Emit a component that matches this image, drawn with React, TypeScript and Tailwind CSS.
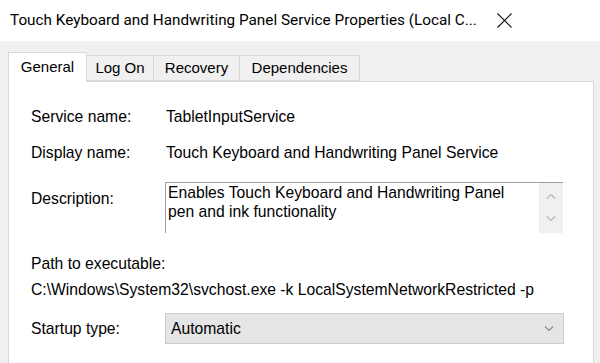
import React from "react";

const Chevron = ({ up = false, color = "#b5b5b5" }: { up?: boolean; color?: string }) => (
  <svg width="10" height="6" viewBox="0 0 10 6" fill="none">
    <path
      d={up ? "M1 5.5 L5 1.5 L9 5.5" : "M1 0.5 L5 4.5 L9 0.5"}
      stroke={color}
      strokeWidth="1.2"
    />
  </svg>
);

export default function App() {
  return (
    <div
      className="w-[600px] h-[363px] overflow-hidden bg-[#f0f0f0] text-black"
      style={{ fontFamily: '"Liberation Sans", Arial, sans-serif' }}
    >
      {/* Title bar */}
      <div className="h-[41px] bg-white flex items-center pl-[10px]">
        <span
          className="w-[487px] shrink-0 text-[15.3px] leading-none whitespace-nowrap"
          style={{ fontFamily: 'Roboto, "Liberation Sans", sans-serif' }}
        >
          Touch Keyboard and Handwriting Panel Service Properties (Local C...
        </span>
        <svg className="shrink-0" width="15" height="15" viewBox="0 0 15 15">
          <path d="M0.5 0.5 L14.5 14.5 M14.5 0.5 L0.5 14.5" stroke="#111" strokeWidth="1.1" />
        </svg>
      </div>

      {/* Tabs */}
      <div className="pt-[11px] pl-[8px] flex items-end text-[15px]">
        <div className="relative z-10 -mb-px w-[79px] h-[30px] bg-white border border-b-0 border-[#d9d9d9] flex items-center justify-center pb-[1px]">
          General
        </div>
        <div className="w-[67px] h-[26px] border border-l-0 border-[#d9d9d9] bg-[#f0f0f0] flex items-center justify-center">
          Log On
        </div>
        <div className="w-[86px] h-[26px] border border-l-0 border-[#d9d9d9] bg-[#f0f0f0] flex items-center justify-center">
          Recovery
        </div>
        <div className="w-[120px] h-[26px] border border-l-0 border-[#d9d9d9] bg-[#f0f0f0] flex items-center justify-center">
          Dependencies
        </div>
      </div>

      {/* Panel */}
      <div className="ml-[8px] w-[586px] h-[300px] bg-white border border-[#d9d9d9] pl-[22px] pt-[25px] text-[15.7px]">
        <div className="flex h-[20px] items-center">
          <div className="w-[134px]">Service name:</div>
          <div className="pl-[1px]">TabletInputService</div>
        </div>
        <div className="flex h-[20px] items-center mt-[16px]">
          <div className="w-[134px]">Display name:</div>
          <div className="pl-[1px]">Touch Keyboard and Handwriting Panel Service</div>
        </div>
        <div className="flex items-start mt-[19px]">
          <div className="w-[134px] mt-[7px] h-[20px] leading-[20px]">Description:</div>
          <div className="w-[398px] h-[51px] border-t border-l border-[#a0a0a0] flex">
            <div className="flex-1 pl-[2px] leading-[19px]">
              Enables Touch Keyboard and Handwriting Panel
              <br />
              pen and ink functionality
            </div>
            <div className="w-[24px] bg-[#f0f0f0] flex flex-col items-center pt-[10px] gap-[17px]">
              <Chevron up />
              <Chevron />
            </div>
          </div>
        </div>
        <div className="mt-[21px] h-[20px] leading-[20px]">Path to executable:</div>
        <div className="mt-[6px] h-[20px] leading-[20px] whitespace-nowrap">
          C:\Windows\System32\svchost.exe -k LocalSystemNetworkRestricted -p
        </div>
        <div className="flex items-center mt-[13px]">
          <div className="w-[134px]">Startup type:</div>
          <div className="w-[399px] h-[31px] bg-[#e5e5e5] border border-[#cccccc] flex items-center justify-between pl-[5px] pr-[9px]">
            <span>Automatic</span>
            <Chevron color="#8a8a8a" />
          </div>
        </div>
      </div>
    </div>
  );
}
